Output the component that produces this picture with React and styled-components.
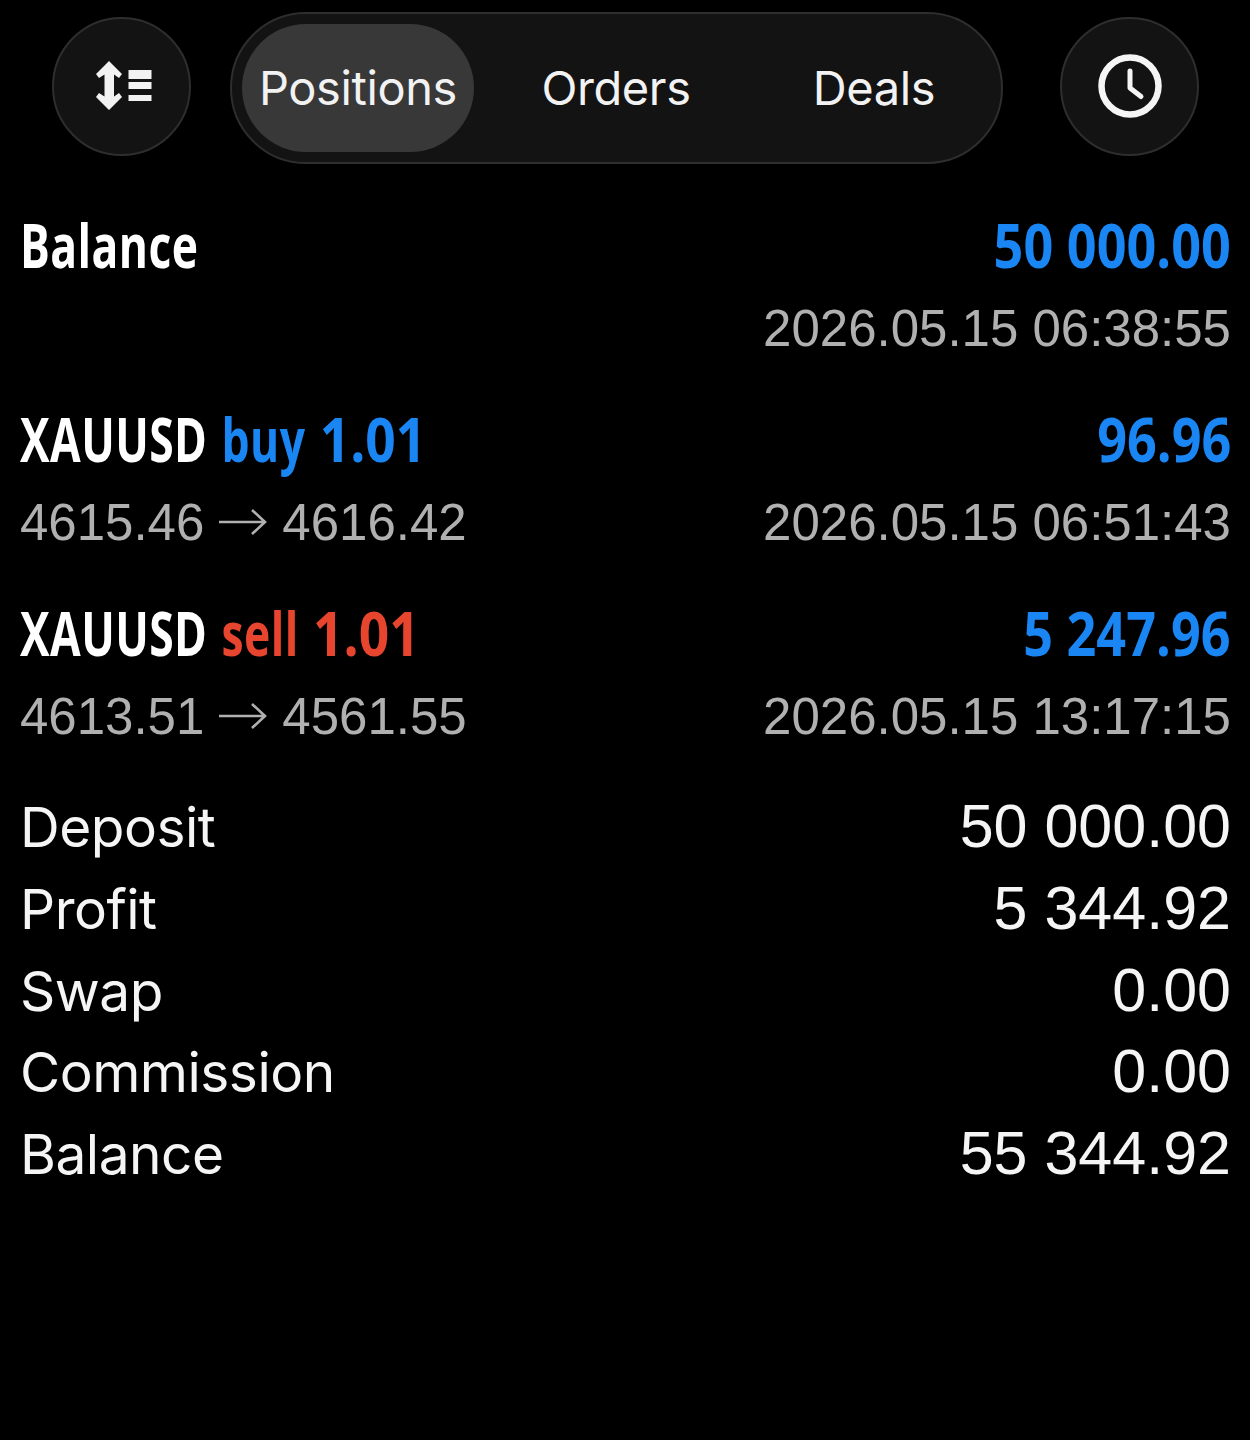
import styled, { createGlobalStyle } from "styled-components";

const GlobalStyle = createGlobalStyle`
  html, body {
    margin: 0;
    background: #000;
  }
`;

const Page = styled.div`
  width: 1250px;
  height: 1440px;
  box-sizing: border-box;
  padding: 12px 19px 0 20px;
  background: #000;
  color: #f5f5f5;
  font-family: "Liberation Sans", Arial, sans-serif;
  overflow: hidden;
`;

const Toolbar = styled.div`
  display: flex;
  align-items: center;
  height: 152px;
  padding-left: 32px;
  margin-bottom: 42px;
`;

const RoundButton = styled.div`
  width: 139px;
  height: 139px;
  flex: none;
  box-sizing: border-box;
  border-radius: 50%;
  border: 2px solid #2e2e2e;
  background: #131313;
  display: flex;
  align-items: center;
  justify-content: center;
  margin-bottom: 4px;
`;

const Tabs = styled.div`
  width: 773px;
  height: 152px;
  flex: none;
  box-sizing: border-box;
  padding: 10px;
  margin: 0 57px 0 39px;
  border-radius: 76px;
  border: 2px solid #2e2e2e;
  background: #131313;
  display: flex;
  align-items: center;
`;

const Tab = styled.div`
  height: 128px;
  width: 232px;
  flex: none;
  margin-right: ${(p) => p.$gap || 0}px;
  border-radius: 64px;
  background: ${(p) => (p.$active ? "#383838" : "transparent")};
  display: flex;
  align-items: center;
  justify-content: center;
  padding-bottom: 2px;
  box-sizing: border-box;
  font-family: Inter, sans-serif;
  font-size: 47px;
  letter-spacing: -0.4px;
  color: #f2f2f2;
`;

const Row = styled.div`
  display: flex;
  justify-content: space-between;
  align-items: baseline;
  height: ${(p) => p.$height}px;
  line-height: ${(p) => p.$height}px;
`;

const Group = styled.div`
  margin-bottom: ${(p) => p.$gap}px;
`;

const Title = styled.span`
  display: inline-block;
  font-family: "Open Sans", sans-serif;
  font-weight: 700;
  font-size: 60px;
  letter-spacing: 0.6px;
  word-spacing: 3px;
  color: ${(p) => p.$color || "#fff"};
  transform: translateY(-2px) scaleX(0.74);
  transform-origin: ${(p) => (p.$right ? "right" : "left")} center;
  white-space: nowrap;
`;

// the condensed face in the picture has wider digits than its letters
const Digits = styled.span`
  display: inline-block;
  letter-spacing: 0;
  word-spacing: 0;
  transform: scaleX(${(p) => (p.$flush ? 1.175 : 1.2)});
  transform-origin: ${(p) => (p.$flush ? "right" : "left")} center;
`;

const Blue = styled.span`
  color: #1a86f4;
`;

const Red = styled.span`
  color: #e8452f;
`;

const Muted = styled.span`
  font-size: 51px;
  color: #b0b0b0;
  white-space: nowrap;
`;

const Label = styled.span`
  font-family: Inter, sans-serif;
  font-size: 55px;
  letter-spacing: -0.5px;
  color: #f5f5f5;
`;

const Value = styled.span`
  font-size: 61px;
  color: #f5f5f5;
`;

const Totals = styled.div`
  margin-top: -2px;
`;

const Arrow = styled.svg`
  width: 50px;
  height: 28px;
  margin: 0 14px;
  vertical-align: 4px;
`;

const SortSvg = styled.svg`
  margin-left: 4px;
`;

function PriceArrow() {
  return (
    <Arrow viewBox="0 0 50 28" fill="none" stroke="#b0b0b0" strokeWidth="2.6">
      <path d="M1 14h46M34 2l13 12-13 12" />
    </Arrow>
  );
}

function SortIcon() {
  return (
    <SortSvg width="56" height="50" viewBox="0 0 56 50" fill="#f2f2f2">
      <path d="M13 0l13 13-3 4-5-3.500v22l5-3.500 3 4-13 13L0 36l3-4 5.500 3.500v-22L3 17l-3-4z" />
      <rect x="32.500" y="9" width="23" height="9" />
      <rect x="32.500" y="21" width="23" height="7" />
      <rect x="32.500" y="34" width="23" height="6" />
    </SortSvg>
  );
}

function ClockIcon() {
  return (
    <svg width="66" height="66" viewBox="0 0 66 66" fill="none" stroke="#f5f5f5">
      <circle cx="33" cy="33" r="28.500" strokeWidth="6.500" />
      <path d="M33 18v17l11 8.500" strokeWidth="5" strokeLinecap="round" strokeLinejoin="round" />
    </svg>
  );
}

function Trade({ side, lot, profit, from, to, time, color: Side }) {
  return (
    <Group $gap={30}>
      <Row $height={82}>
        <Title>
          XAUUSD <Side>{side} <Digits>{lot}</Digits></Side>
        </Title>
        <Title $right $color="#1a86f4"><Digits $flush>{profit}</Digits></Title>
      </Row>
      <Row $height={82}>
        <Muted>
          {from}
          <PriceArrow />
          {to}
        </Muted>
        <Muted>{time}</Muted>
      </Row>
    </Group>
  );
}

export default function App() {
  const totals = [
    ["Deposit", "50 000.00"],
    ["Profit", "5 344.92"],
    ["Swap", "0.00"],
    ["Commission", "0.00"],
    ["Balance", "55 344.92"],
  ];

  return (
    <Page>
      <GlobalStyle />
      <Toolbar>
        <RoundButton>
          <SortIcon />
        </RoundButton>
        <Tabs>
          <Tab $active $gap={26}>Positions</Tab>
          <Tab $gap={26}>Orders</Tab>
          <Tab>Deals</Tab>
        </Tabs>
        <RoundButton>
          <ClockIcon />
        </RoundButton>
      </Toolbar>

      <Group $gap={30}>
        <Row $height={82}>
          <Title>Balance</Title>
          <Title $right $color="#1a86f4"><Digits $flush>50 000.00</Digits></Title>
        </Row>
        <Row $height={82}>
          <span />
          <Muted>2026.05.15 06:38:55</Muted>
        </Row>
      </Group>

      <Trade side="buy" lot="1.01" profit="96.96" from="4615.46" to="4616.42" time="2026.05.15 06:51:43" color={Blue} />
      <Trade side="sell" lot="1.01" profit="5 247.96" from="4613.51" to="4561.55" time="2026.05.15 13:17:15" color={Red} />

      <Totals>
        {totals.map(([label, value]) => (
          <Row $height={81.75} key={label}>
            <Label>{label}</Label>
            <Value>{value}</Value>
          </Row>
        ))}
      </Totals>
    </Page>
  );
}
